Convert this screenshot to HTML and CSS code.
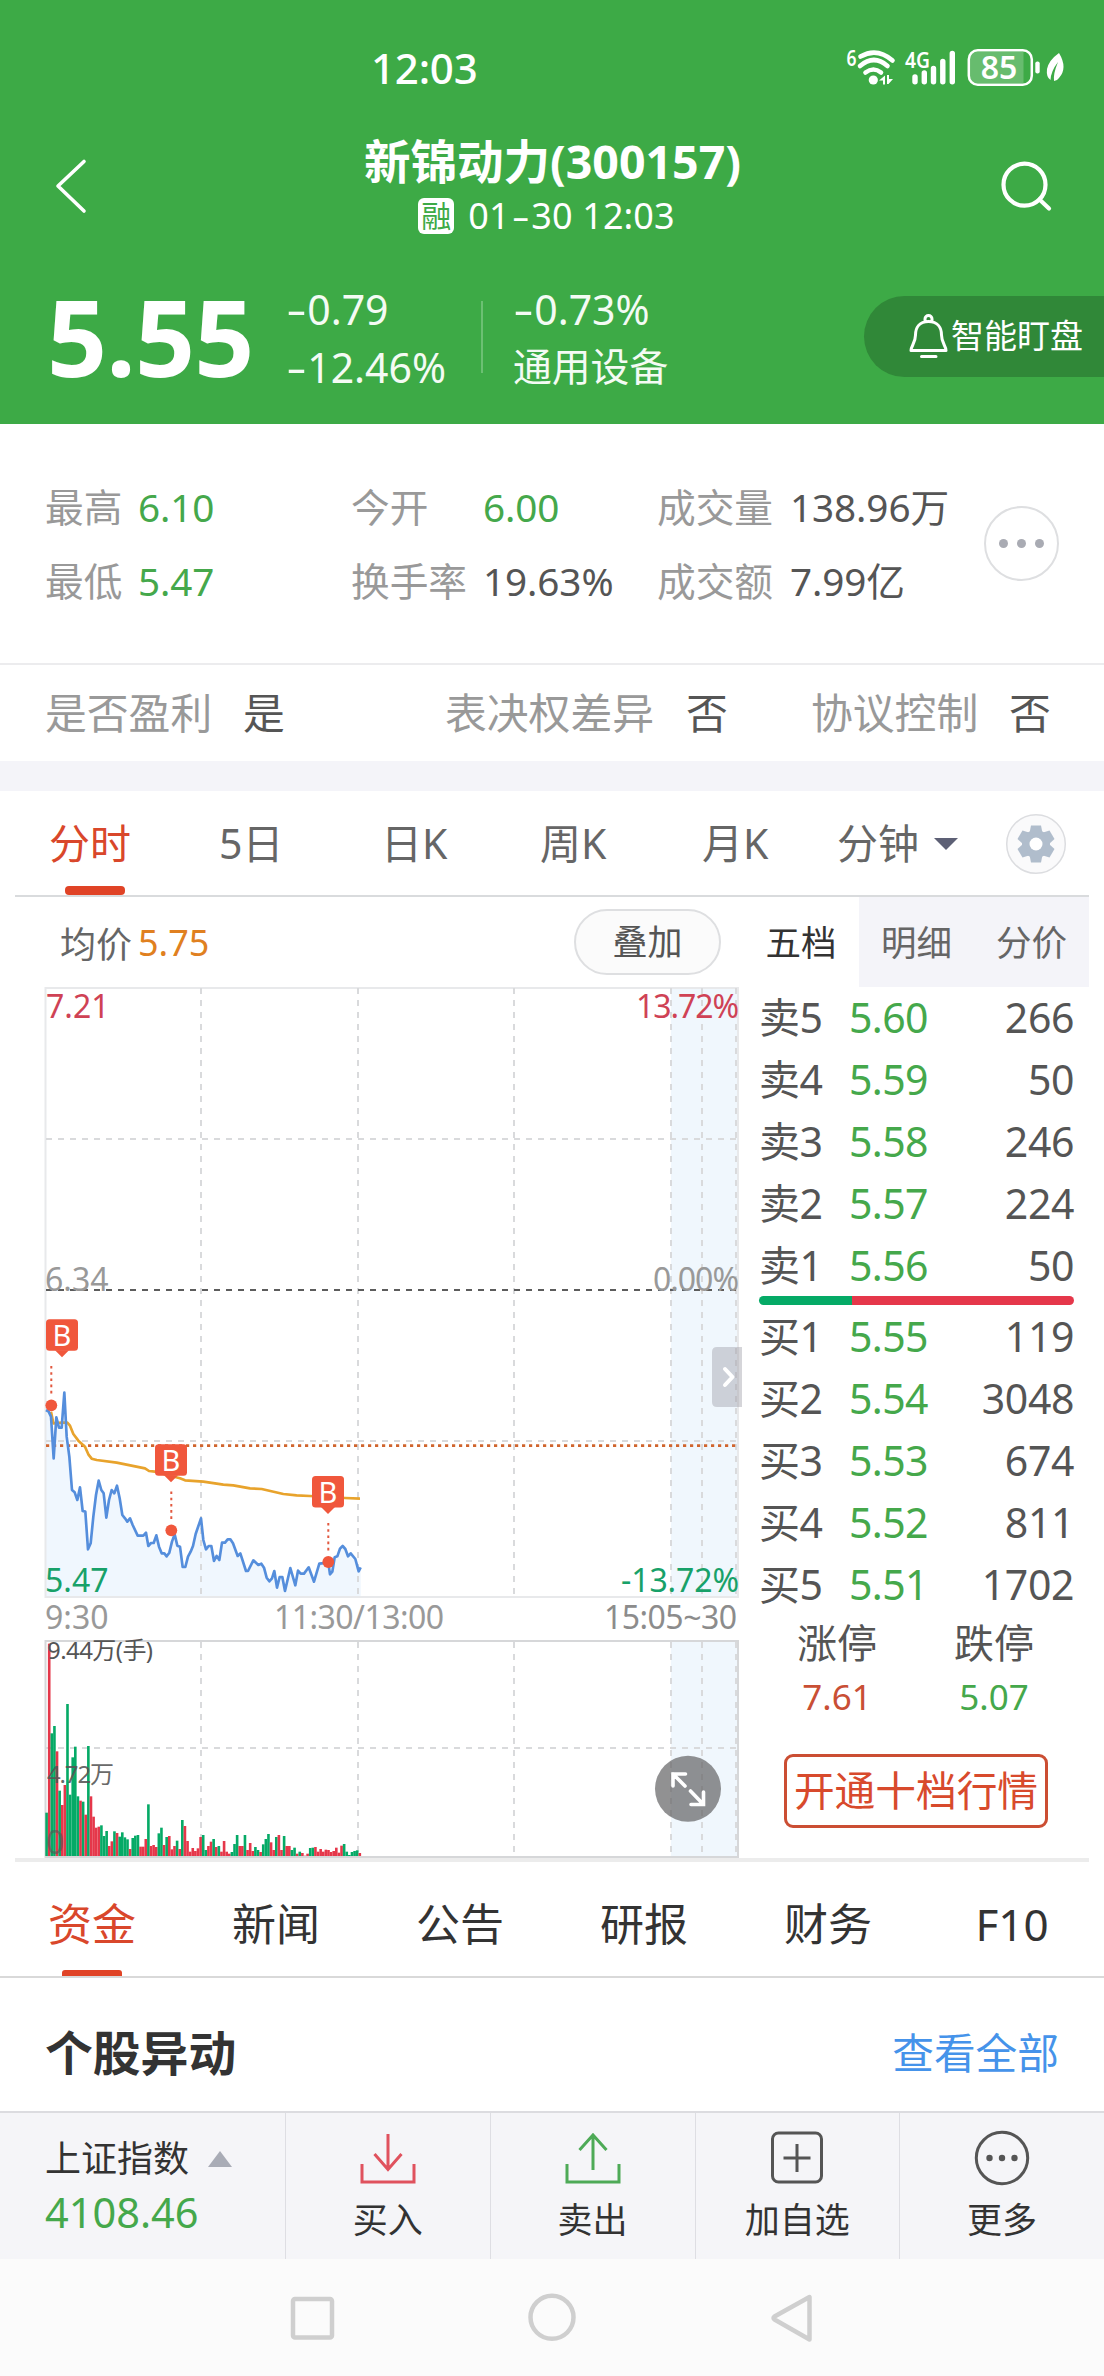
FILE: index.html
```html
<!DOCTYPE html>
<html lang="zh-CN">
<head>
<meta charset="utf-8">
<title>新锦动力(300157)</title>
<link rel="stylesheet" href="styles.css">
</head>
<body>
<div class="app">
  <header class="hero">
    <div class="status">
      <span class="clock">12:03</span>
      <svg class="status-icons" width="230" height="50" viewBox="840 42 230 50">
        <text x="846.500" y="65.500" font-size="21" font-weight="600" textLength="10" lengthAdjust="spacingAndGlyphs">6</text>
        <g fill="none" stroke="#fff" stroke-width="4.6" stroke-linecap="round">
          <path d="M860.5 56.500Q877 47 892.500 60.500"/>
          <path d="M860 66Q874 54 887.500 66"/>
          <path d="M865.500 72.500Q873.500 66.500 881 72.500"/>
        </g>
        <circle cx="873.300" cy="80" r="4.600"/>
        <path d="M879 80.500l6-5v9h-2v-4zM887 75v9h1.500l4.500-5h-4v-4z"/>
        <text x="905" y="67.500" font-size="21" font-weight="600" textLength="25" lengthAdjust="spacingAndGlyphs">4G</text>
        <g stroke="#fff" stroke-width="5.400" stroke-linecap="round">
          <path d="M915 77v4.700M924.300 73v8.700M933.500 68.500v13.200M942.800 61.500v20.200M952.300 53.500v28.200"/>
        </g>
        <path d="M976 52h47.500v31h-47.500q-6 0-6-6v-19q0-6 6-6z" fill-opacity=".22"/>
        <rect x="968.800" y="50.300" width="63" height="34.400" rx="9" fill="none" stroke="#fff" stroke-width="2.500"/>
        <text x="999" y="79.300" font-size="32" font-weight="600" text-anchor="middle">85</text>
        <rect x="1035.300" y="61.500" width="4.400" height="12" rx="2"/>
        <path d="M1059 53Q1068 68 1059 78Q1057 81 1054 81Q1053 74 1058 62Q1051 71 1050.500 80Q1046 77 1047 69Q1049 60 1059 53z"/>
      </svg>
    </div>
    <div class="nav">
      <svg class="nav-icon" width="40" height="60" viewBox="50 156 40 60"><path d="M84 161.500L58 186L84 211" /></svg>
      <div class="nav-title">
        <h1>新锦动力(300157)</h1>
        <div class="nav-sub"><span class="tag">融</span><span class="stamp">01<span class="neg">-</span>30 12:03</span></div>
      </div>
      <svg class="nav-icon search" width="60" height="60" viewBox="995 156 60 60"><circle cx="1024.500" cy="184.700" r="21"/><path d="M1039.500 199.500L1049 208.500"/></svg>
    </div>
    <div class="quote">
      <strong class="price">5.55</strong>
      <div class="delta"><span><span class="neg">-</span>0.79</span><span><span class="neg">-</span>12.46%</span></div>
      <div class="sector"><span><span class="neg">-</span>0.73%</span><span class="cn">通用设备</span></div>
      <div class="watch">
        <svg width="42" height="50" viewBox="0 0 42 50"><path d="M18 9.500V7a3.500 3.500 0 0 1 7 0v2.500M21.500 9.500C12 9.500 8.500 16 8.500 23C8.500 31 4 34 4 38.500H39C39 34 34.500 31 34.500 23C34.500 16 31 9.500 21.500 9.500zM14.500 44.500H29"/></svg>
        <span>智能盯盘</span>
      </div>
    </div>
  </header>

  <section class="stats">
    <div class="stat-grid">
      <span class="k">最高</span><span class="v up">6.10</span><span class="k">今开</span><span class="v up">6.00</span><span class="k">成交量</span><span class="v">138.96万</span>
      <span class="k">最低</span><span class="v up">5.47</span><span class="k">换手率</span><span class="v">19.63%</span><span class="k">成交额</span><span class="v">7.99亿</span>
    </div>
    <div class="more-btn"><i></i><i></i><i></i></div>
  </section>
  <section class="flags">
    <span class="k">是否盈利</span><span>是</span><span class="k">表决权差异</span><span>否</span><span class="k">协议控制</span><span>否</span>
  </section>
  <div class="band"></div>

  <nav class="periods">
    <span class="active">分时</span><span>5日</span><span>日K</span><span>周K</span><span>月K</span>
    <span class="minute">分钟<i class="caret"></i></span>
    <svg class="gear" width="62" height="62" viewBox="-31 -31 62 62">
      <circle r="29.300" fill="#fafafb" stroke="#dcdde0" stroke-width="1.500"/>
      <g fill="#b0bdcc">
        <circle r="14"/>
        <path d="M-5-18.500H5L6.500-11H-6.500z"/><path d="M-5-18.500H5L6.500-11H-6.500z" transform="rotate(60)"/><path d="M-5-18.500H5L6.500-11H-6.500z" transform="rotate(120)"/><path d="M-5-18.500H5L6.500-11H-6.500z" transform="rotate(180)"/><path d="M-5-18.500H5L6.500-11H-6.500z" transform="rotate(240)"/><path d="M-5-18.500H5L6.500-11H-6.500z" transform="rotate(300)"/>
      </g>
      <circle r="6.500" fill="#fff"/>
    </svg>
  </nav>

  <section class="market">
    <div class="chart-col">
      <div class="chart-head"><span class="avg">均价</span><span class="avg-v">5.75</span><span class="overlay">叠加</span></div>
      <svg class="chart" width="714" height="871" viewBox="30 987 714 871">
        <rect x="671" y="988" width="67" height="609" fill="#f0f7fd"/>
        <rect x="671" y="1641" width="67" height="216" fill="#f0f7fd"/>
        <path id="area" fill="#f0f7fe"/>
        <g fill="none" stroke="#e8e9eb" stroke-width="2"><rect x="45.500" y="988" width="692.500" height="609"/></g>
        <g fill="none" stroke="#d9dadc" stroke-width="2" stroke-dasharray="6 6">
          <path d="M201 988V1597M358 988V1597M514 988V1597M671 988V1597M702 988V1597M736 988V1597"/>
          <path d="M46 1139H738M46 1441H738M46 1748H738"/>
          <path d="M201 1642V1857M358 1642V1857M514 1642V1857M671 1642V1857M702 1642V1857M736 1642V1857"/>
        </g>
        <rect x="45.500" y="1641" width="692.500" height="216" fill="none" stroke="#d6d7d9" stroke-width="2"/>
        <path d="M46 1290H738" stroke="#5c5c5c" stroke-width="1.800" stroke-dasharray="6 6"/>
        <path d="M46 1445.700H738" stroke="#d0652e" stroke-width="2.800" stroke-dasharray="3.200 3.800"/>
        <g transform="translate(30 1260) scale(.33333)" fill="none" stroke-linejoin="round">
          <path d="M63 455L70 490L95 488L112 488L120 497L130 522L145 542L165 560L175 583L185 596L200 600L260 608L345 625L357 633L375 635L450 655L465 661L520 665L580 674L610 676L660 685L695 687L760 702L800 706L840 708L945 714L990 716" stroke="#e8a32c" stroke-width="8"/>
          <path id="trend" stroke="#558edc" stroke-width="8"/>
        </g>
        <g id="volume"></g>
        <g class="marks">
          <path d="M51.300 1366V1394M171.300 1491.500V1520M328.300 1523V1551"/>
          <circle cx="51.300" cy="1405.300" r="5.900"/><circle cx="171.300" cy="1530.300" r="5.900"/><circle cx="328.300" cy="1562" r="5.900"/>
          <g transform="translate(62 1319.300)"><rect x="-16" width="32" height="31.500" rx="3.500"/><path class="tip" d="M-7 31L0 38L7 31z"/><text y="27">B</text></g>
          <g transform="translate(171 1444.300)"><rect x="-16" width="32" height="31.500" rx="3.500"/><path class="tip" d="M-7 31L0 38L7 31z"/><text y="27">B</text></g>
          <g transform="translate(328 1476)"><rect x="-16" width="32" height="31.500" rx="3.500"/><path class="tip" d="M-7 31L0 38L7 31z"/><text y="27">B</text></g>
        </g>
        <g font-size="32" fill="#999">
          <text x="46" y="1018" fill="#cf4255">7.21</text><text x="739" y="1018" text-anchor="end" textLength="103" fill="#cf4255">13.72%</text>
          <text x="45" y="1291">6.34</text><text x="739" y="1291" text-anchor="end" textLength="86">0.00%</text>
          <text x="45" y="1592" fill="#18a169">5.47</text><text x="739" y="1592" text-anchor="end" fill="#18a169" textLength="118">-13.72%</text>
          <text x="45" y="1629">9:30</text><text x="359" y="1629" text-anchor="middle" textLength="170">11:30/13:00</text><text x="737" y="1629" text-anchor="end" textLength="133" fill="#8c8c8c">15:05~30</text>
        </g>
        <g font-size="24" fill="#555"><text x="47" y="1659" textLength="106">9.44万(手)</text><text x="47" y="1783" textLength="67" fill-opacity=".9">4.72万</text><text x="46" y="1854" font-size="32" fill-opacity=".6">0</text></g>
        <path d="M742 1347H717q-5 0-5 5v50q0 5 5 5H742z" fill="#9a9aa5" fill-opacity=".42"/>
        <path d="M725 1369L732.500 1377L725 1385" fill="none" stroke="#fff" stroke-width="4" stroke-linecap="round" stroke-linejoin="round"/>
        <circle cx="688" cy="1788.800" r="33" fill="#626264" fill-opacity=".7"/>
        <path d="M685 1786L673 1774M673 1786V1774H685.500M690.500 1791L703 1804M691 1804.500H703.500V1792" fill="none" stroke="#fff" stroke-width="3.600" stroke-linecap="round"/>
      </svg>
    </div>
    <div class="book">
      <div class="book-tabs"><span class="active">五档</span><span>明细</span><span>分价</span></div>
      <div class="rows asks">
        <div><span>卖5</span><b>5.60</b><em>266</em></div>
        <div><span>卖4</span><b>5.59</b><em>50</em></div>
        <div><span>卖3</span><b>5.58</b><em>246</em></div>
        <div><span>卖2</span><b>5.57</b><em>224</em></div>
        <div><span>卖1</span><b>5.56</b><em>50</em></div>
      </div>
      <div class="ratio"></div>
      <div class="rows bids">
        <div><span>买1</span><b>5.55</b><em>119</em></div>
        <div><span>买2</span><b>5.54</b><em>3048</em></div>
        <div><span>买3</span><b>5.53</b><em>674</em></div>
        <div><span>买4</span><b>5.52</b><em>811</em></div>
        <div><span>买5</span><b>5.51</b><em>1702</em></div>
      </div>
      <div class="limits"><span>涨停</span><span>跌停</span><b class="hi">7.61</b><b class="lo">5.07</b></div>
      <div class="level2">开通十档行情</div>
    </div>
  </section>
  <div class="rule"></div>

  <nav class="info-tabs"><span class="active">资金</span><span>新闻</span><span>公告</span><span>研报</span><span>财务</span><span>F10</span></nav>
  <section class="moves"><h2>个股异动</h2><a>查看全部</a></section>

  <footer class="toolbar">
    <div class="index"><div class="index-name">上证指数<i class="tri"></i></div><div class="index-v">4108.46</div></div>
    <div class="tool"><svg width="60" height="60" viewBox="-30 -30 60 60" stroke="#e0525e"><path d="M-26 6V24H26V6M0-24V11M-13.500-4L0 11.500L13.500-4"/></svg><span>买入</span></div>
    <div class="tool"><svg width="60" height="60" viewBox="-30 -30 60 60" stroke="#4eaa57"><path d="M-26 6V24H26V6M0 12V-22M-13.500-8L0-23L13.500-8"/></svg><span>卖出</span></div>
    <div class="tool"><svg width="60" height="60" viewBox="-30 -30 60 60" stroke="#555"><rect x="-24.500" y="-25" width="49" height="49" rx="6"/><path d="M-13.500 0H13.500M0-14V14"/></svg><span>加自选</span></div>
    <div class="tool"><svg width="60" height="60" viewBox="-30 -30 60 60" stroke="#555"><circle r="25.700"/><g fill="#555" stroke="none"><circle cx="-12.500" r="3.200"/><circle r="3.200"/><circle cx="12.500" r="3.200"/></g></svg><span>更多</span></div>
  </footer>
  <div class="sysnav">
    <svg width="1104" height="117" viewBox="0 2259 1104 117"><rect x="293" y="2299" width="39" height="38.500" rx="2"/><circle cx="552" cy="2317.300" r="21.500"/><path d="M809.500 2297V2339.500L774.500 2319.500Q772.500 2318 774.500 2316.500z"/></svg>
  </div>
</div>
<script src="chart.js"></script>
</body>
</html>
```

FILE: styles.css
```css
* { box-sizing: border-box; }
body { margin: 0; background: #fff; color: #555; font-family: "Noto Sans", "Noto Sans CJK SC", sans-serif; }
h1, h2 { margin: 0; }
b, em { font-weight: 400; font-style: normal; }
svg { display: block; }
svg text { font-family: "Noto Sans", "Noto Sans CJK SC", sans-serif; }
.app { width: 1104px; height: 2376px; overflow: hidden; white-space: nowrap; }
.neg { display: inline-block; transform: scaleX(1.55); margin: 0 4px; }

.hero { height: 424px; background: #3daa46; color: #fff; }
.status { height: 134px; padding: 42px 34px 0 371px; display: flex; justify-content: space-between; }
.clock { font-size: 42px; font-weight: 500; line-height: 51px; letter-spacing: -.2px; }
.status-icons { fill: #fff; }
.nav { height: 120px; padding: 0 49px 0 50px; display: flex; justify-content: space-between; }
.nav-icon { margin-top: 22px; fill: none; stroke: #fff; stroke-width: 3.6; stroke-linecap: round; stroke-linejoin: round; }
.nav-icon.search { stroke-width: 4.2; }
.nav-title { display: flex; flex-direction: column; align-items: center; padding-left: 20px; }
h1 { font-size: 46.500px; font-weight: 700; line-height: 55px; }
.nav-sub { display: flex; align-items: center; height: 36px; margin-top: 9px; gap: 14px; padding-right: 12px; }
.tag { width: 36px; height: 36px; border-radius: 6px; background: #fff; color: #3daa46; font-size: 30px; line-height: 35px; text-align: center; }
.stamp { font-size: 36px; line-height: 38px; letter-spacing: .1px; }
.stamp .neg { margin: 0 5px; }
.quote { height: 170px; display: flex; padding-left: 47px; }
.price { width: 239px; margin-top: 22px; font-size: 105px; font-weight: 700; line-height: 122px; letter-spacing: -.8px; }
.delta, .sector { display: flex; flex-direction: column; padding-top: 26px; font-size: 41px; line-height: 58px; color: #f4fbf4; }
.delta { width: 197px; background: linear-gradient(#6cc073, #6cc073) right 47px / 2px 72px no-repeat; }
.sector { width: 381px; padding-left: 30px; }
.sector .cn { font-size: 38.800px; line-height: 57px; }
.watch { width: 240px; height: 81px; margin-top: 42px; border-radius: 41px 0 0 41px; background: #308838; display: flex; align-items: center; padding-left: 43px; font-size: 33px; gap: 2px; }
.watch svg { fill: none; stroke: #fff; stroke-width: 3; stroke-linejoin: round; stroke-linecap: round; }
.watch span { line-height: 40px; padding-bottom: 2px; }

.k { color: #999; }
.stats { height: 241px; display: flex; border-bottom: 2px solid #ececee; padding: 46px 45px 0 45px; justify-content: space-between; }
.stat-grid { display: grid; grid-template-columns: 93px 213px 132px 174px 133px 160px; grid-auto-rows: 74px; line-height: 74px; font-size: 38.700px; }
.v { letter-spacing: -.1px; }
.up { color: #45a84b; }
.more-btn { width: 75px; height: 75px; margin-top: 36px; border: 2px solid #dedfe1; border-radius: 50%; display: flex; align-items: center; justify-content: center; gap: 9px; flex: none; }
.more-btn i { width: 9px; height: 9px; border-radius: 50%; background: #a9abb3; }
.flags { height: 96px; display: grid; grid-template-columns: 198px 202px 241px 125px 198px 60px; padding-left: 45px; line-height: 96px; font-size: 41.800px; }
.band { height: 30px; background: #f4f4f9; }

.periods { height: 106px; margin: 0 15px; border-bottom: 2px solid #d9dbdd; display: grid; grid-template-columns: 170px 162px 159px 162px 135px 168px 80px; padding-left: 34px; font-size: 41px; line-height: 105px; color: #666; }
.periods .active { color: #d9472b; position: relative; }
.periods .active::after { content: ""; position: absolute; left: 16px; bottom: 1px; width: 60px; height: 9px; border-radius: 4px; background: #e04326; }
.minute { display: flex; align-items: center; gap: 15px; }
.caret { border: 12px solid transparent; border-top-color: #5d6075; border-bottom: 0; }
.gear { margin-top: 22px; }

.market { display: flex; height: 961px; }
.chart-col { width: 744px; padding-left: 30px; }
.chart-head { height: 90px; display: flex; align-items: center; padding-left: 30px; font-size: 36px; color: #666; }
.avg-v { color: #e08020; margin-left: 6px; }
.overlay { width: 147px; height: 66px; margin-left: auto; margin-right: 23px; border: 2px solid #dedfe1; border-radius: 33px; background: #fbfbfb; text-align: center; line-height: 61px; font-size: 35px; color: #555; }
.marks path { stroke: #e2583f; stroke-width: 2; stroke-dasharray: 2.600 3.600; }
.marks path.tip { stroke: none; }
.marks circle, .marks rect, .marks .tip { fill: #f0573c; }
.marks text { font-size: 29px; text-anchor: middle; fill: #fff; }

.book { width: 345px; padding-left: 15px; }
.book-tabs { height: 90px; width: 330px; display: grid; grid-template-columns: 100px 115px 115px; line-height: 90px; font-size: 35.500px; color: #666; text-align: center; }
.book-tabs span { background: #f4f4f9; }
.book-tabs .active { background: none; color: #333; text-indent: -16px; }
.rows { font-size: 41px; letter-spacing: -.4px; width: 315px; }
.rows div { height: 62px; line-height: 61px; display: flex; }
.rows span { width: 90px; }
.rows b { color: #45a84b; letter-spacing: -.6px; }
.rows em { margin-left: auto; }
.ratio { width: 315px; height: 9px; border-radius: 5px; background: linear-gradient(90deg, #05aa66 93px, #e5374a 93px); margin-top: -1px; }
.bids { margin-top: 1px; }
.limits { display: grid; grid-template-columns: 156px 158px; grid-template-rows: 54px 56px; line-height: 54px; font-size: 40px; text-align: center; }
.limits b { font-size: 35px; }
.hi { color: #c94f35; }
.lo { color: #45a84b; }
.level2 { width: 264px; height: 74px; margin: 28px 0 0 25px; border: 3px solid #cb4e33; border-radius: 9px; color: #d84a2c; font-size: 40.700px; line-height: 67px; text-align: center; }
.rule { height: 4px; margin: 0 15px; background: #ececec; }

.info-tabs { height: 116px; border-bottom: 2px solid #d9d9d9; display: grid; grid-template-columns: repeat(6, 184px); grid-template-rows: 114px; font-size: 44px; line-height: 125px; text-align: center; color: #333; }
.info-tabs .active { color: #d9472b; position: relative; }
.info-tabs .active::after { content: ""; position: absolute; left: 62px; bottom: 0; width: 60px; height: 6px; border-radius: 3px 3px 0 0; background: #e04326; }
.moves { height: 133px; padding: 0 45px; display: flex; justify-content: space-between; line-height: 149px; }
.moves h2 { font-size: 47.800px; color: #333; font-weight: 700; }
.moves a { font-size: 41.700px; color: #4593ea; }

.toolbar { height: 148px; background: #f5f5f8; border-top: 2px solid #dcdce0; display: grid; grid-template-columns: 285px repeat(4, 204.750px); color: #333; }
.index { padding: 19px 0 0 45px; line-height: 54px; font-size: 36px; }
.index-name { display: flex; align-items: center; gap: 19px; }
.tri { border: 12px solid transparent; border-bottom: 16px solid #a9acb6; border-top: 0; }
.index-v { color: #45a84b; font-size: 41.500px; line-height: 52px; }
.tool { border-left: 1px solid #dedee3; display: flex; flex-direction: column; align-items: center; padding-top: 15px; font-size: 35px; line-height: 60px; }
.tool svg { fill: none; stroke-width: 3; }
.tool span { margin-top: 2px; }
.sysnav { background: #fbfbfb; }
.sysnav svg { fill: none; stroke: #cfcfcf; stroke-width: 4.500; stroke-linejoin: round; }
```

FILE: chart.js
```js
// Intraday price points, in thirds of a pixel from the chart's (30, 1260) origin.
const trend = [48,450,56,455,63,470,71,595,79,472,87,503,95,503,103,398,110,530,118,590,126,690,134,697,142,720,150,682,158,753,166,755,174,868,182,850,190,770,198,705,206,662,214,690,221,700,229,773,237,720,245,690,253,700,261,677,269,715,277,765,285,775,292,785,300,775,308,795,323,827,340,827,348,818,355,858,363,849,371,849,379,826,387,860,395,880,403,880,410,889,418,878,426,845,434,823,442,857,450,860,458,921,466,921,474,890,482,875,489,858,497,822,513,775,520,840,528,868,536,858,544,858,552,903,560,888,568,900,576,848,585,848,593,838,601,838,609,850,623,888,631,880,648,933,654,933,670,901,685,915,694,911,702,923,710,953,718,964,726,955,733,933,741,983,749,951,757,951,765,993,781,924,796,976,804,932,812,941,822,941,836,922,852,965,868,911,895,908,900,943,907,935,914,892,922,889,930,866,938,858,946,867,954,889,962,880,976,897,986,934,992,922];
let line = "", area = "M46 1596";
for (let i = 0; i < trend.length; i += 2) {
  line += (i ? "L" : "M") + trend[i] + " " + trend[i + 1];
  area += "L" + (30 + trend[i] / 3).toFixed(1) + " " + (1260 + trend[i + 1] / 3).toFixed(1);
}
document.getElementById("trend").setAttribute("d", line);
document.getElementById("area").setAttribute("d", area + "V1596z");

// One bar per minute: direction letter and height in thirds of a pixel.
const bars = "g130 r637 g368 g390 r314 g196 r153 r213 g456 g184 g296 g328 g179 r166 g163 r124 g330 r179 r118 r85 r88 g92 g60 g75 r30 r44 g74 r69 g58 g71 g56 g50 r21 g54 g61 g63 r28 r28 r51 g155 r30 r33 r27 g68 g85 r33 g57 r60 r20 r30 g46 r21 g108 r90 r45 r13 r24 r15 r23 r57 g63 g18 r30 r43 g51 r27 g30 r13 r45 r13 r7 g12 g36 g63 r30 r30 g63 r18 r39 r15 g27 g18 r12 g35 g51 g66 r41 r18 g57 r63 r18 g60 r30 r30 g18 g25 r7 g13 r9 r1 r7 g24 g25 r27 r13 r21 r13 r19 r18 r12 r15 r25 r10 r31 g36 g13 g3 g12 g15 g17 r9".split(" ");
const colors = { g: "#05aa66", r: "#e5374a" };
const group = document.getElementById("volume");
bars.forEach((bar, i) => {
  const h = +bar.slice(1) / 3;
  const r = document.createElementNS("http://www.w3.org/2000/svg", "rect");
  r.setAttribute("x", (45.3 + i * 2.61).toFixed(2));
  r.setAttribute("y", (1856 - h).toFixed(2));
  r.setAttribute("width", "2.61");
  r.setAttribute("height", h.toFixed(2));
  r.setAttribute("fill", colors[bar[0]]);
  group.appendChild(r);
});
```
